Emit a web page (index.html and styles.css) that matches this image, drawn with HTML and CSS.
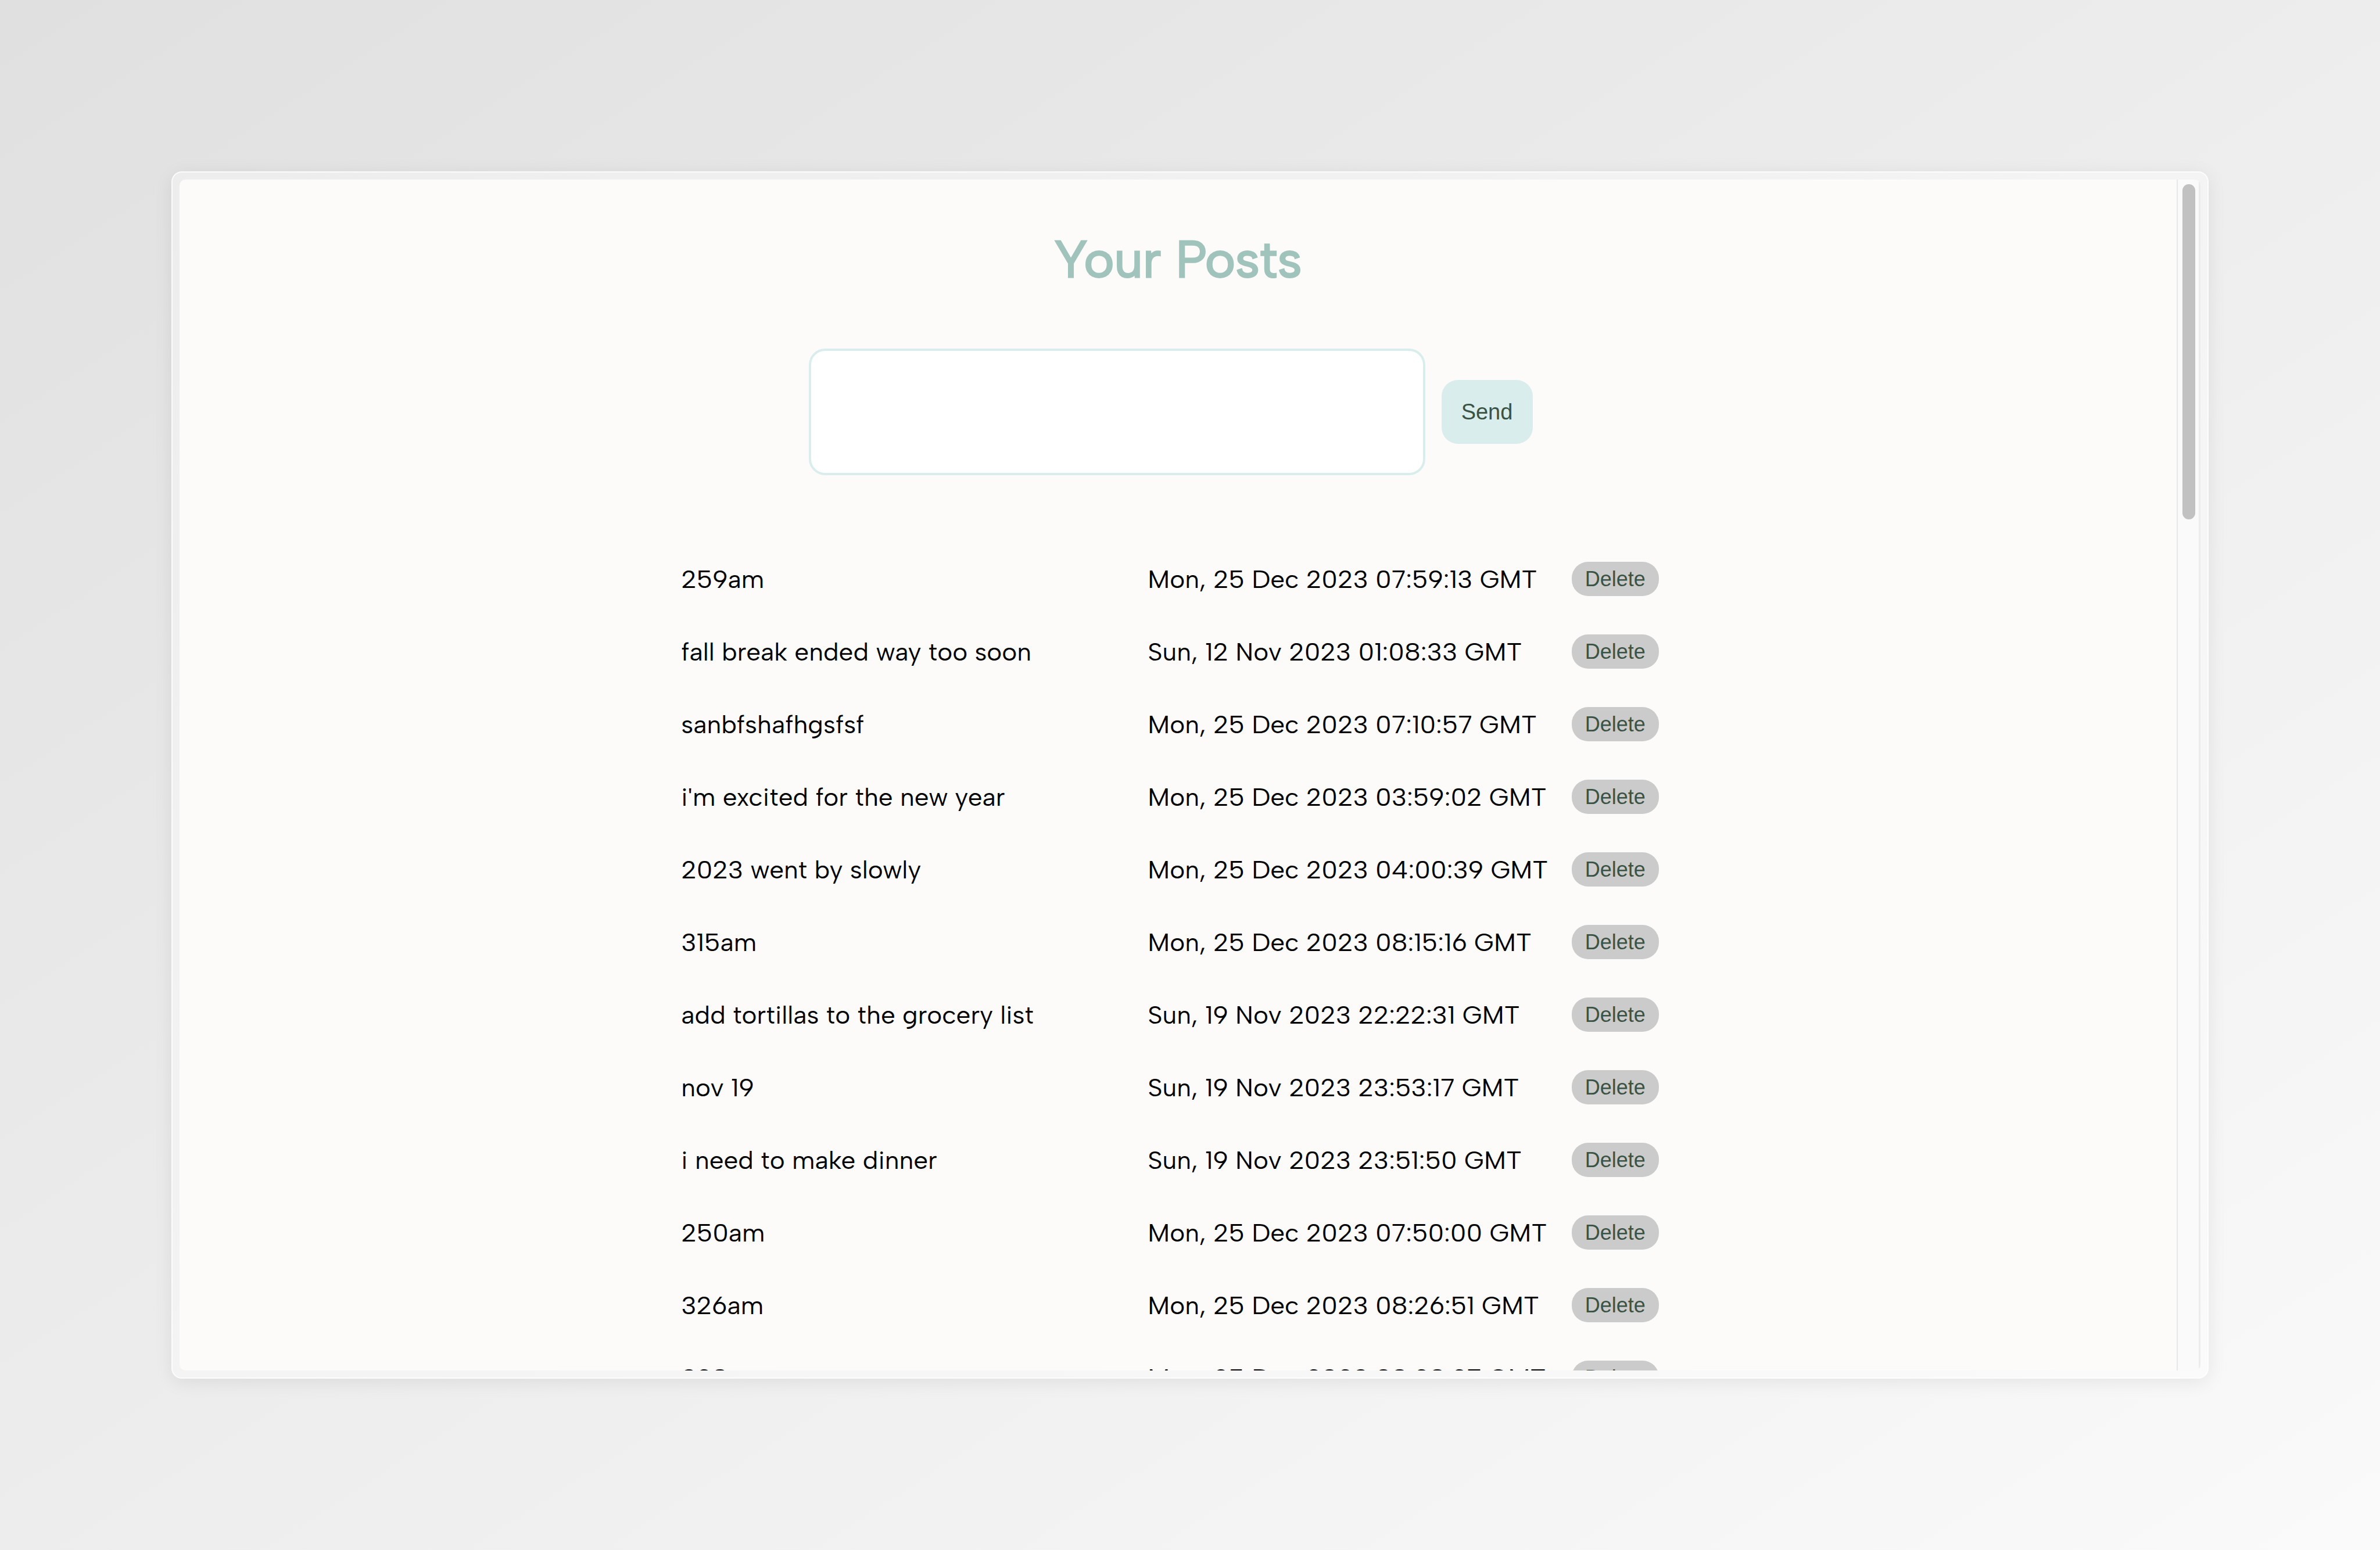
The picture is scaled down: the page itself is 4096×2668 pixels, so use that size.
FILE: index.html
```html
<!DOCTYPE html>
<html lang="en">
<head>
  <meta charset="utf-8">
  <title>Your Posts</title>
  <link rel="stylesheet" href="styles.css">
</head>
<body>
  <div class="window">
    <div class="viewport">
      <main class="page">
        <h1 class="title">Your Posts</h1>
        <form class="composer">
          <textarea class="composer-input" aria-label="New post"></textarea>
          <button class="send" type="button">Send</button>
        </form>
        <table class="posts">
          <tbody>
            <tr><td>259am</td><td>Mon, 25 Dec 2023 07:59:13 GMT</td><td><button class="delete" type="button">Delete</button></td></tr>
            <tr><td>fall break ended way too soon</td><td>Sun, 12 Nov 2023 01:08:33 GMT</td><td><button class="delete" type="button">Delete</button></td></tr>
            <tr><td>sanbfshafhgsfsf</td><td>Mon, 25 Dec 2023 07:10:57 GMT</td><td><button class="delete" type="button">Delete</button></td></tr>
            <tr><td>i'm excited for the new year</td><td>Mon, 25 Dec 2023 03:59:02 GMT</td><td><button class="delete" type="button">Delete</button></td></tr>
            <tr><td>2023 went by slowly</td><td>Mon, 25 Dec 2023 04:00:39 GMT</td><td><button class="delete" type="button">Delete</button></td></tr>
            <tr><td>315am</td><td>Mon, 25 Dec 2023 08:15:16 GMT</td><td><button class="delete" type="button">Delete</button></td></tr>
            <tr><td>add tortillas to the grocery list</td><td>Sun, 19 Nov 2023 22:22:31 GMT</td><td><button class="delete" type="button">Delete</button></td></tr>
            <tr><td>nov 19</td><td>Sun, 19 Nov 2023 23:53:17 GMT</td><td><button class="delete" type="button">Delete</button></td></tr>
            <tr><td>i need to make dinner</td><td>Sun, 19 Nov 2023 23:51:50 GMT</td><td><button class="delete" type="button">Delete</button></td></tr>
            <tr><td>250am</td><td>Mon, 25 Dec 2023 07:50:00 GMT</td><td><button class="delete" type="button">Delete</button></td></tr>
            <tr><td>326am</td><td>Mon, 25 Dec 2023 08:26:51 GMT</td><td><button class="delete" type="button">Delete</button></td></tr>
            <tr><td>328am</td><td>Mon, 25 Dec 2023 08:28:27 GMT</td><td><button class="delete" type="button">Delete</button></td></tr>
          </tbody>
        </table>
      </main>
      <div class="scroll-track"><div class="scroll-thumb"></div></div>
    </div>
  </div>
</body>
</html>
```
FILE: styles.css
```css
* {
  box-sizing: border-box;
}

body {
  margin: 0;
  height: 100vh;
  padding: 295px;
  display: flex;
  background: linear-gradient(to bottom right, #e0e0e0, #fafafa);
  font-family: "Albert Sans", Lato, sans-serif;
  font-size: 44px;
  line-height: 52px;
  color: #000;
}

.window {
  flex: 1;
  min-width: 0;
  display: flex;
  padding: 12px;
  border: 2px solid rgba(255, 255, 255, 0.85);
  border-radius: 18px;
  background: rgba(255, 255, 255, 0.38);
  background-clip: padding-box;
  box-shadow: 0 6px 32px rgba(0, 0, 0, 0.08);
}

.viewport {
  flex: 1;
  min-width: 0;
  display: flex;
  overflow: hidden;
  border-radius: 10px;
}

.page {
  flex: 1;
  min-width: 0;
  display: flex;
  flex-direction: column;
  align-items: center;
  padding-top: 84px;
  overflow: hidden;
  background: #fcfbf9;
}

.title {
  margin: 0;
  font-size: 88px;
  line-height: 106px;
  font-weight: 400;
  color: #a0c3bc;
  -webkit-text-stroke: 3px #a0c3bc;
}

.composer {
  display: flex;
  align-items: center;
  gap: 28px;
  margin: 101px 26px 0 0;
}

.composer-input {
  width: 1061px;
  height: 218px;
  padding: 16px 28px;
  border: 4px solid #d9eeec;
  border-radius: 28px;
  background: #fff;
  font: inherit;
  resize: none;
}

.send,
.delete {
  border: 0;
  border-radius: 28px;
  font-family: "Liberation Sans", Arial, sans-serif;
  color: #3a5344;
}

.send {
  width: 157px;
  height: 110px;
  padding: 0;
  background: #d9eeec;
  font-size: 38px;
}

.posts {
  width: 50%;
  margin-top: 116px;
  border-collapse: collapse;
  table-layout: fixed;
}

.posts td {
  height: 125px;
  padding: 0 4px;
  text-align: left;
  vertical-align: middle;
}

.posts td:nth-child(1) {
  width: 803px;
}

.posts td:nth-child(3) {
  width: 186px;
}

.delete {
  display: block;
  width: 150px;
  height: 59px;
  padding: 0;
  background: #cbcbcb;
  font-size: 36px;
}

.scroll-track {
  width: 41px;
  padding: 8px;
  border-left: 2px solid #e8e7e8;
  border-right: 3px solid #ececec;
  background: #fafafa;
}

.scroll-thumb {
  width: 22px;
  height: 577px;
  border-radius: 12px;
  background: #c1c1c1;
}
```
